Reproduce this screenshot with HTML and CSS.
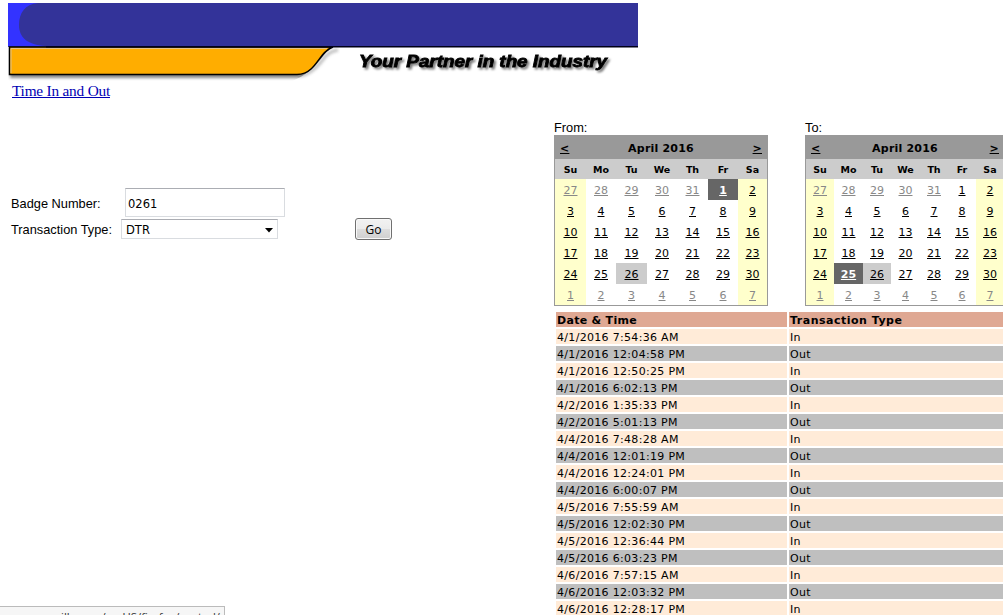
FILE: index.html
```html
<!DOCTYPE html>
<html lang="en">
<head>
<meta charset="utf-8">
<title>Time In and Out</title>
<link rel="stylesheet" href="styles.css">
</head>
<body>
<header>
<svg class="banner" width="632" height="78" viewBox="8 3 632 78">
  <defs>
    <filter id="soft" x="-5%" y="-20%" width="110%" height="160%"><feGaussianBlur stdDeviation="1.4"/></filter>
  </defs>
  <path d="M10 49H638V49.5H334C324 52 320 67 311 73Q306 78 298 78H10Z" fill="#555" opacity=".7" filter="url(#soft)"/>
  <rect x="8" y="3" width="630" height="44" fill="#333399"/>
  <path d="M8 3H38C25 4 19 13 19 25S27 45 46 46H8Z" fill="#3333ff"/>
  <path d="M336 47.5H640V82H290Q309 75 321 59Q328 48 336 47.5Z" fill="#fff"/>
  <path d="M299 76Q310 75 321 62Q328 51 338 50" fill="none" stroke="#777" stroke-width="3" opacity=".5" filter="url(#soft)"/>
  <path d="M9.500 47H333C323 50 319 62 311 69Q305 74.500 297 74.500H9.500Z" fill="#ffad00" stroke="#000" stroke-width="1.500"/>
  <path d="M11 73V48.500H327" fill="none" stroke="#dfc28c" stroke-width="1"/>
  <path d="M46 46.800H638" stroke="#000018" stroke-width="1.600"/>
  <text class="tagline" x="359" y="66.500" textLength="248" lengthAdjust="spacingAndGlyphs">Your Partner in the Industry</text>
</svg>
<a class="page-link" href="#">Time In and Out</a>
</header>
<main>
  <form class="filters">
    <div class="row badge-row"><label for="badge">Badge Number:</label><input id="badge" type="text" value="0261"></div>
    <div class="row type-row"><span class="type-label">Transaction Type:</span>
      <div class="select"><span>DTR</span><svg width="8" height="5" viewBox="0 0 8 5"><path d="M0 0H8L4 4.500Z" fill="#000"/></svg></div>
      <button type="button">Go</button></div>
  </form>
  <section class="results">
    <div class="calendars">
      <div class="picker from"><div class="caption">From:</div><div class="calendar" data-selected="1"></div></div>
      <div class="picker to"><div class="caption">To:</div><div class="calendar" data-selected="25"></div></div>
    </div>
    <table class="log"><thead><tr><th>Date &amp; Time</th><th>Transaction Type</th></tr></thead><tbody></tbody></table>
  </section>
</main>
<div class="status">www.mozilla.com/en-US/firefox/central/</div>
<script src="main.js"></script>
</body>
</html>
```
FILE: styles.css
```css
* { box-sizing: border-box; }
html, body { height: 100%; }
body { margin: 0; padding: 3px 0 0; background: #fff; overflow: hidden; position: relative; font: 11px/15px "DejaVu Sans", Verdana, sans-serif; color: #000; }
header { height: 117px; padding-left: 8px; }
.banner { display: block; }
.tagline { font: italic 900 16px "Liberation Sans", Arial, sans-serif; stroke: #000; stroke-width: .8px; filter: drop-shadow(2px 2px 1.2px #777); }
.page-link { display: block; width: max-content; margin: 1px 0 0 4px; font: 15.3px/18px "Liberation Serif", "Times New Roman", serif; letter-spacing: -.2px; color: #0000b4; }
main { display: flex; }
.filters { width: 554px; flex: none; padding: 68px 0 0 11px; font: 12.8px/18px "Liberation Sans", Arial, sans-serif; }
.row { display: flex; align-items: center; }
.badge-row { height: 29px; }
.badge-row label { width: 114px; padding-top: 2px; }
.badge-row input { width: 160px; height: 29px; padding: 3px 2px 1px; border: 1px solid #d9dce0; border-top-color: #abadb3; font: 11px "DejaVu Sans", sans-serif; color: #000; }
.type-row { height: 24px; }
.type-label { width: 110px; white-space: nowrap; padding-top: 1px; }
.select { display: flex; align-items: center; justify-content: space-between; width: 157px; height: 20px; padding: 2px 4px 0; border: 1px solid #d9dce0; border-top-color: #abadb3; font: 11.5px "DejaVu Sans", sans-serif; }
button { width: 37px; height: 22px; margin-left: 77px; padding: 0; border: 1px solid #707070; border-radius: 3px; background: linear-gradient(#f2f2f2, #ebebeb 50%, #ddd 50%, #cfcfcf); box-shadow: inset 0 0 0 1px #f8f8f8; font: 12px "Open Sans", sans-serif; color: #000; }
.badge-row input { font-size: 11.5px; }
.results { flex: none; width: 470px; }
.calendars { display: flex; gap: 37px; }
.caption { height: 15px; font: 12.8px/15px "Liberation Sans", Arial, sans-serif; }
.calendar { border: 1px solid #999; height: 171px; }
.from { width: 214px; }
.to { width: 200px; }
.cal-title { display: flex; justify-content: space-between; height: 23px; padding: 0 5px; background: #999; font-weight: bold; line-height: 25px; letter-spacing: .2px; }
.cal-title a, .days a { color: inherit; text-decoration: underline; }
.weekdays, .days { display: grid; text-align: center; }
.from .weekdays, .from .days { grid-template-columns: 31px 30px 31px 30px 31px 30px 29px; }
.to .weekdays, .to .days { grid-template-columns: 28px 29px 28px 29px 28px 28px 28px; }
.weekdays { height: 20px; background: #ccc; font-size: 9.5px; font-weight: bold; line-height: 21px; }
.days { grid-auto-rows: 21px; line-height: 23px; }
.weekend { background: #ffffcc; }
.other { color: #888; }
.today { background: #ccc; }
.selected { background: #666; color: #fff; font-weight: bold; }
.log { width: 470px; margin-top: 4px; border-collapse: separate; border-spacing: 2px; table-layout: fixed; letter-spacing: .31px; }
.log th, .log td { height: 15px; padding: 2px 1px 0; text-align: left; line-height: 13px; background: #ffebd8; }
.log th:first-child { width: 231px; }
.log th { background: #dfa893; letter-spacing: .5px; }
.log th:first-child { letter-spacing: .3px; }
.log tbody tr:nth-child(even) td { background: #bfbfbf; }
.status { position: absolute; left: 0; bottom: 0; width: 225px; height: 9px; padding: 0 4px; display: flex; justify-content: flex-end; overflow: hidden; border: 1px solid #bbb; border-width: 1px 1px 0 0; background: #f6f6f6; font: 11.3px/20px "Open Sans", sans-serif; white-space: nowrap; color: #333; }
```
FILE: main.js
```js
const dates = [27, 28, 29, 30, 31, ...Array.from({ length: 30 }, (_, i) => i + 1), 1, 2, 3, 4, 5, 6, 7];
document.querySelectorAll('.calendar').forEach(cal => {
  const selected = Number(cal.dataset.selected);
  const cells = dates.map((day, i) => {
    const current = i >= 5 && i < 35;
    const classes = [];
    if (i % 7 === 0 || i % 7 === 6) classes.push('weekend');
    if (!current) classes.push('other');
    if (current && day === 26) classes.push('today');
    if (current && day === selected) classes.push('selected');
    return `<div class="${classes.join(' ')}"><a>${day}</a></div>`;
  }).join('');
  const names = ['Su', 'Mo', 'Tu', 'We', 'Th', 'Fr', 'Sa'].map(d => `<span>${d}</span>`).join('');
  cal.innerHTML = `<div class="cal-title"><a>&lt;</a><span>April 2016</span><a>&gt;</a></div><div class="weekdays">${names}</div><div class="days">${cells}</div>`;
});
const times = ['4/1/2016 7:54:36 AM', '4/1/2016 12:04:58 PM', '4/1/2016 12:50:25 PM', '4/1/2016 6:02:13 PM',
  '4/2/2016 1:35:33 PM', '4/2/2016 5:01:13 PM', '4/4/2016 7:48:28 AM', '4/4/2016 12:01:19 PM',
  '4/4/2016 12:24:01 PM', '4/4/2016 6:00:07 PM', '4/5/2016 7:55:59 AM', '4/5/2016 12:02:30 PM',
  '4/5/2016 12:36:44 PM', '4/5/2016 6:03:23 PM', '4/6/2016 7:57:15 AM', '4/6/2016 12:03:32 PM',
  '4/6/2016 12:28:17 PM'];
document.querySelector('.log tbody').innerHTML = times.map((t, i) => `<tr><td>${t}</td><td>${i % 2 ? 'Out' : 'In'}</td></tr>`).join('');
```
